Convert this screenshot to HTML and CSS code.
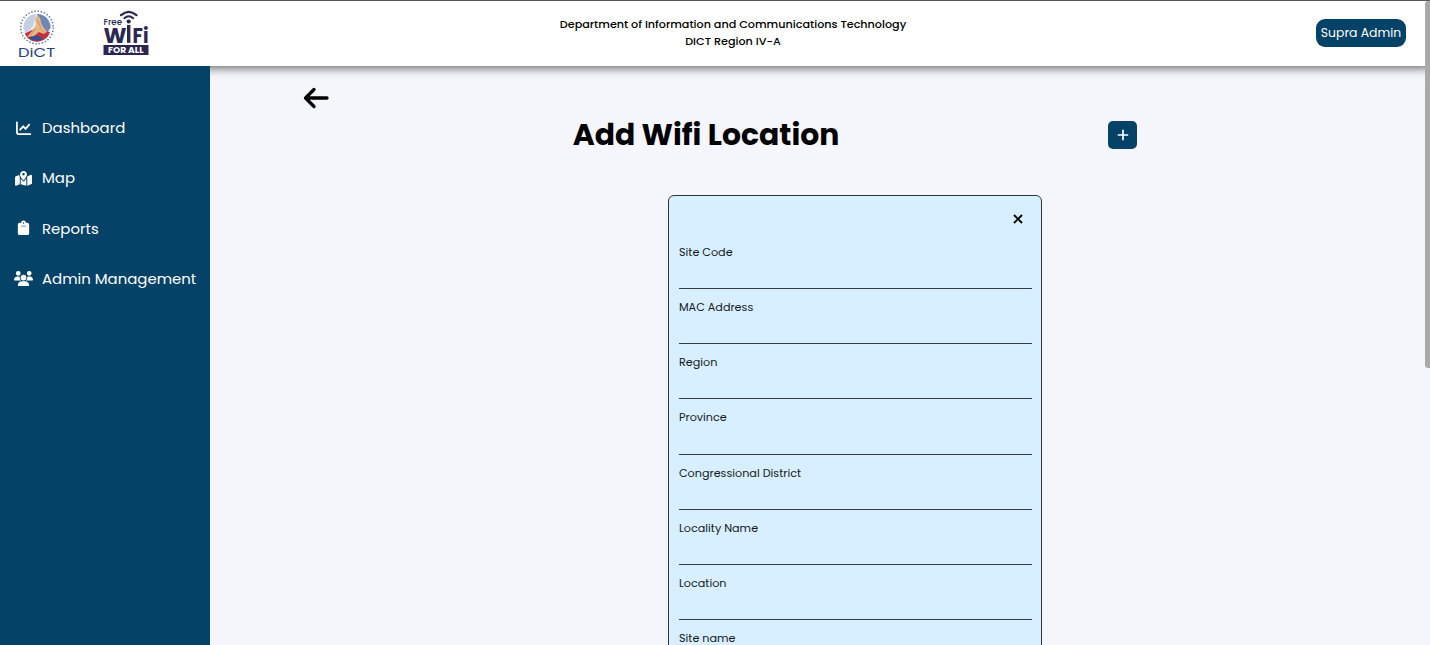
FILE: index.html
```html
<!DOCTYPE html>
<html lang="en">
<head>
<meta charset="utf-8">
<title>Add Wifi Location</title>
<link rel="stylesheet" href="styles.css">
</head>
<body>
<div class="app">
  <header class="header">
    <div class="logos">
      <svg class="logo-dict" width="40" height="50" viewBox="0 0 40 50">
        <circle cx="20" cy="17.500" r="16.300" fill="none" stroke="#7283aa" stroke-width="1.600" stroke-dasharray="1.500 1.700"/>
        <g transform="translate(0 -1)">
        <circle cx="20" cy="18.500" r="13.600" fill="#e9edf5"/>
        <path d="M20 4.900A13.600 13.600 0 0 1 33.600 18.500L30 24 22 12Z" fill="#6f87b6"/>
        <path d="M6.400 18.500A13.600 13.600 0 0 1 19 5L16 17 9 25Z" fill="#c3cfe5"/>
        <path d="M8 24.500L17 20 33 23A13.600 13.600 0 0 1 9 27Z" fill="#c42f3e"/>
        <path d="M11 29L19 26 27 30Q20 34 11 29Z" fill="#34508e"/>
        <path d="M18 9Q21 5 23 9L25 17 30 23 27 25 22 23 17 27 10 28 15 22 19 16Z" fill="#e7b781"/>
        <path d="M20 11L24 18M18 20L13 27M23 19L28 24" stroke="#c98768" stroke-width=".8"/>
        </g>
        <text class="dict-name" x="1" y="47" textLength="37" lengthAdjust="spacingAndGlyphs">DiCT</text>
      </svg>
      <svg class="logo-wifi" width="48" height="48" viewBox="0 0 48 48">
        <g fill="none" stroke="#2b2752" stroke-linecap="round">
          <path d="M19 5.200Q26.700 -1.500 34.500 5.200" stroke-width="2.200"/>
          <path d="M22.300 8.200Q26.700 4.400 31.200 8.200" stroke-width="2"/>
        </g>
        <circle cx="26.700" cy="11.500" r="2.100" fill="#2b2752"/>
        <text class="wifi-free" x="1.500" y="15.300" textLength="18.500" lengthAdjust="spacingAndGlyphs">Free</text>
        <text class="wifi-name" x="1.500" y="32.800" textLength="23" lengthAdjust="spacingAndGlyphs">W</text>
        <rect x="25" y="15" width="3.400" height="17.800" fill="#2b2752"/>
        <text class="wifi-name" x="30.500" y="32.800" textLength="16" lengthAdjust="spacingAndGlyphs">Fi</text>
        <rect x="1.500" y="35" width="45" height="10" fill="#2b2752"/>
        <text class="wifi-all" x="6" y="42.900" textLength="35.500" lengthAdjust="spacingAndGlyphs">FOR ALL</text>
      </svg>
    </div>
    <div class="agency">
      <div class="agency-name">Department of Information and Communications Technology</div>
      <div class="agency-region">DICT Region IV-A</div>
    </div>
    <button class="account">Supra Admin</button>
  </header>

  <div class="body">
    <nav class="sidebar">
      <a class="nav-item">
        <svg class="nav-icon" viewBox="0 0 18 18"><path d="M2 2.500V13Q2 15 4 15H16.200" fill="none" stroke="#fff" stroke-width="1.900" stroke-linecap="round"/><path d="M5.500 10.300L8.700 6.700 11.200 9.300 15 5" fill="none" stroke="#fff" stroke-width="2" stroke-linecap="round" stroke-linejoin="round"/></svg>
        <span>Dashboard</span>
      </a>
      <a class="nav-item">
        <svg class="nav-icon nav-icon-map" viewBox="0 0 576 512"><path fill="#fff" d="M408 120c0 54.600-73.100 151.900-105.200 192-7.700 9.600-22 9.600-29.600 0C241.100 271.900 168 174.600 168 120 168 53.700 221.700 0 288 0s120 53.700 120 120zm8 80.400c3.500-6.900 6.700-13.800 9.600-20.600.5-1.200 1-2.500 1.500-3.700l116-46.400C558.900 123.400 576 135 576 152v270.800c0 9.800-6 18.600-15.100 22.300L416 503V200.400zM137.600 138.300c2.400 14.100 7.200 28.300 12.800 41.500 2.900 6.800 6.100 13.700 9.600 20.600v251.400L32.900 502.700C17.100 509 0 497.400 0 480.400V209.600c0-9.800 6-18.600 15.100-22.300l122.500-49zM327.800 332c13.900-17.400 35.700-45.700 56.200-77v249.300l-192-54.900V255c20.500 31.300 42.300 59.600 56.200 77 20.500 25.600 59.100 25.600 79.600 0zM288 152a40 40 0 1 0 0-80 40 40 0 1 0 0 80z"/></svg>
        <span>Map</span>
      </a>
      <a class="nav-item">
        <svg class="nav-icon" viewBox="0 0 18 18"><path fill="#fff" d="M5 3H6.500A2.500 2.500 0 0 1 11.500 3H13Q15 3 15 5V14Q15 16 13 16H5Q3 16 3 14V5Q3 3 5 3Z"/><circle cx="9" cy="3.300" r=".8" fill="#054267"/><path d="M6.300 6.500H11.700" stroke="#7895aa" stroke-width="1"/></svg>
        <span>Reports</span>
      </a>
      <a class="nav-item">
        <svg class="nav-icon" viewBox="0 0 640 512"><path fill="#fff" d="M144 0a80 80 0 1 1 0 160A80 80 0 1 1 144 0zM512 0a80 80 0 1 1 0 160A80 80 0 1 1 512 0zM0 298.700C0 239.800 47.800 192 106.700 192h42.700c15.900 0 31 3.500 44.600 9.700-1.300 7.200-1.900 14.700-1.900 22.300 0 38.200 16.800 72.500 43.300 96H21.300C9.600 320 0 310.400 0 298.700zM405.300 320h-.7c26.600-23.500 43.300-57.800 43.300-96 0-7.600-.7-15-1.900-22.300 13.600-6.300 28.700-9.700 44.600-9.700h42.700C592.200 192 640 239.800 640 298.700c0 11.800-9.600 21.300-21.300 21.300H405.300zM224 224a96 96 0 1 1 192 0 96 96 0 1 1-192 0zM128 485.300C128 411.700 187.700 352 261.300 352h117.300C452.300 352 512 411.700 512 485.300c0 14.700-11.900 26.700-26.700 26.700H154.700c-14.700 0-26.700-11.900-26.700-26.700z"/></svg>
        <span>Admin Management</span>
      </a>
    </nav>

    <main class="main">
      <svg class="back" width="26" height="22" viewBox="0 0 26 22"><path d="M11 2.500L2.500 11 11 19.500M3 11H24" fill="none" stroke="#000" stroke-width="3.300" stroke-linecap="round" stroke-linejoin="round"/></svg>
      <div class="title-row">
        <h1 class="title">Add Wifi Location</h1>
        <button class="add"><svg width="12" height="12" viewBox="0 0 12 12"><path d="M6 .8V11.200M.8 6H11.200" stroke="#fff" stroke-width="1.700"/></svg></button>
      </div>
      <form class="card">
        <div class="card-top"><svg width="10" height="10" viewBox="0 0 10 10"><path d="M1 1L9 9M9 1L1 9" stroke="#000" stroke-width="1.900"/></svg></div>
        <div class="field"><label>Site Code</label></div>
        <div class="field"><label>MAC Address</label></div>
        <div class="field"><label>Region</label></div>
        <div class="field"><label>Province</label></div>
        <div class="field"><label>Congressional District</label></div>
        <div class="field"><label>Locality Name</label></div>
        <div class="field"><label>Location</label></div>
        <div class="field"><label>Site name</label></div>
      </form>
    </main>
  </div>
  <div class="scroll-thumb"></div>
</div>
</body>
</html>
```

FILE: styles.css
```css
* { box-sizing: border-box; }
body { margin: 0; overflow: hidden; font-family: Poppins, Inter, sans-serif; color: #000; }
button { border: 0; padding: 0; font-family: inherit; }

.app { position: relative; display: flex; flex-direction: column; width: 1430px; height: 645px; overflow: hidden; background: #f4f6fb; }

.header { display: grid; grid-template-columns: 210px 1fr 210px; flex: none; height: 66px; border-top: 1px solid #555; background: #fff; box-shadow: 0 2px 9px rgba(0, 0, 0, .6); }
.logos { display: flex; gap: 45px; padding: 9px 0 0 17px; }
.dict-name { font: 400 12px Poppins, sans-serif; fill: #26417f; }
.wifi-free { font: 500 8px Poppins, sans-serif; fill: #2b2752; }
.wifi-name { font: 700 21px Poppins, sans-serif; fill: #2b2752; }
.wifi-all { font: 700 8.500px Poppins, sans-serif; fill: #fff; }
.agency { padding: 15px 0 0 36px; text-align: center; font-size: 11.200px; font-weight: 500; line-height: 17px; }
.account { justify-self: end; width: 90px; height: 28px; margin: 18px 24px 0 0; border-radius: 9px; background: #054267; color: #fff; font-size: 12.400px; white-space: nowrap; }

.body { display: flex; flex: 1; min-height: 0; }
.sidebar { z-index: 1; display: flex; flex-direction: column; flex: none; gap: 26.300px; width: 210.400px; padding: 50px 0 0 14px; background: #054267; }
.nav-item { display: flex; align-items: center; gap: 9px; height: 24px; color: #fff; font-size: 14.930px; white-space: nowrap; }
.nav-icon { flex: none; width: 19px; height: 17px; }
.nav-icon-map { height: 15px; }

.main { display: flex; flex: 1; flex-direction: column; padding: 21px 0 0 92.300px; }
.back { flex: none; }
.title-row { display: flex; flex: none; align-items: center; justify-content: space-between; width: 834.500px; height: 50px; margin-top: 0.500px; padding-left: 270px; }
.title { margin: 0; font-size: 29.860px; font-weight: 700; line-height: 45px; white-space: nowrap; }
.add { display: flex; align-items: center; justify-content: center; width: 29px; height: 28px; border-radius: 5px; background: #054267; }

.card { flex: none; width: 373.500px; margin: 35.500px 0 0 365.800px; padding: 0 9px 0 9.500px; border: 1px solid #333; border-radius: 6px; background: #d7efff; }
.card-top { display: flex; justify-content: flex-end; height: 38px; padding: 18px 9px 0 0; }
.field { height: 55.170px; padding-top: 10px; border-bottom: 1px solid #333b42; }
.field label { display: block; width: max-content; color: #15191c; font-size: 11.200px; line-height: 16px; }

.scroll-thumb { position: absolute; z-index: 2; top: 1px; right: 0; width: 5px; height: 367px; border-radius: 3px 0 0 3px; background: #a9a9a9; }
```
